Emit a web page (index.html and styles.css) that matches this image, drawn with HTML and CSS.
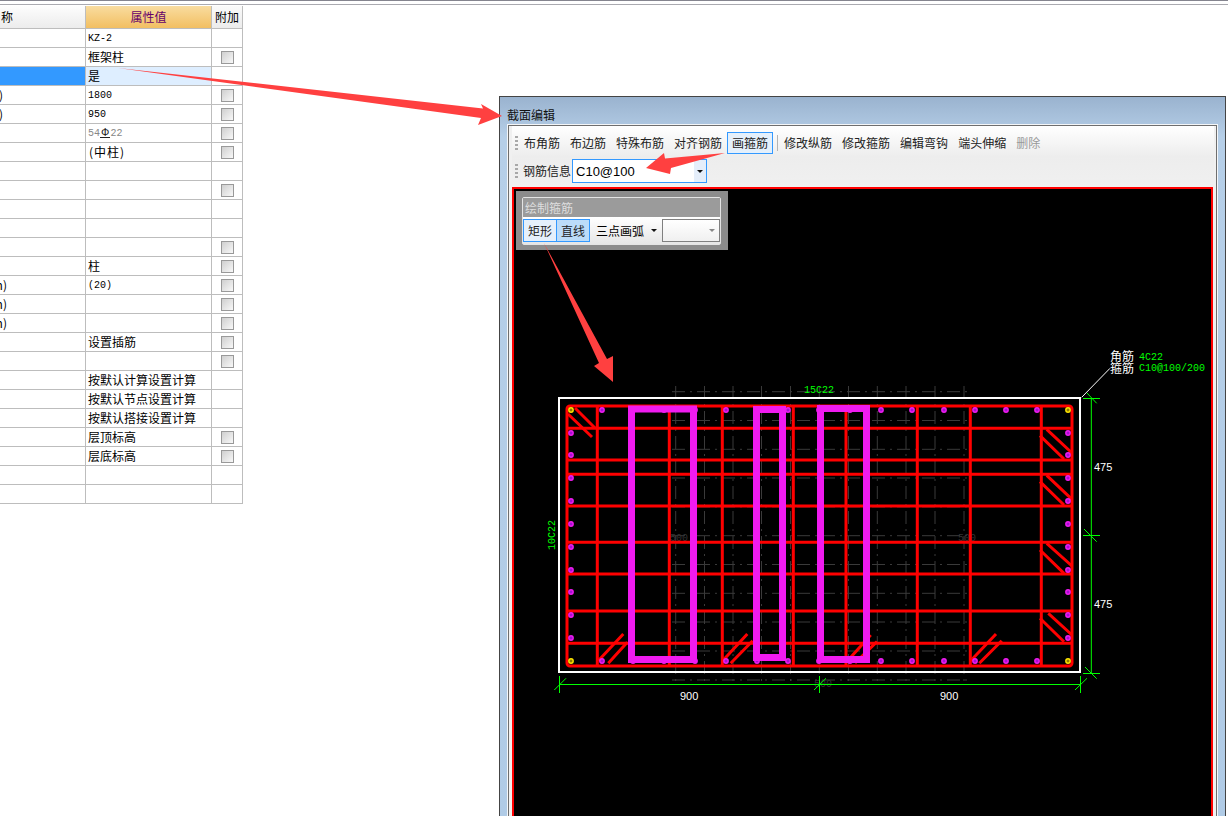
FILE: index.html
```html
<!DOCTYPE html>
<html lang="zh">
<head>
<meta charset="utf-8">
<title>截面编辑</title>
<link rel="stylesheet" href="styles.css">
</head>
<body>
<div class="topbar"></div>
<div class="grid">
  <div class="row head"><div class="c1 lab-h">属性名称</div><div class="c2">属性值</div><div class="c3">附加</div></div>
  <div class="row"><div class="c1"></div><div class="c2 num">KZ-2</div><div class="c3"></div></div>
  <div class="row"><div class="c1"></div><div class="c2">框架柱</div><div class="c3"><span class="cb"></span></div></div>
  <div class="row sel"><div class="c1"></div><div class="c2">是</div><div class="c3"></div></div>
  <div class="row"><div class="c1 lab-a">截面宽度(B边)(mm)</div><div class="c2 num">1800</div><div class="c3"><span class="cb"></span></div></div>
  <div class="row"><div class="c1 lab-a">截面高度(H边)(mm)</div><div class="c2 num">950</div><div class="c3"><span class="cb"></span></div></div>
  <div class="row"><div class="c1"></div><div class="c2 num muted">54<span class="grade">Ф</span>22</div><div class="c3"><span class="cb"></span></div></div>
  <div class="row"><div class="c1"></div><div class="c2 paren">(中柱)</div><div class="c3"><span class="cb"></span></div></div>
  <div class="row"><div class="c1"></div><div class="c2"></div><div class="c3"></div></div>
  <div class="row"><div class="c1"></div><div class="c2"></div><div class="c3"><span class="cb"></span></div></div>
  <div class="row"><div class="c1"></div><div class="c2"></div><div class="c3"></div></div>
  <div class="row"><div class="c1"></div><div class="c2"></div><div class="c3"></div></div>
  <div class="row"><div class="c1"></div><div class="c2"></div><div class="c3"><span class="cb"></span></div></div>
  <div class="row"><div class="c1"></div><div class="c2">柱</div><div class="c3"><span class="cb"></span></div></div>
  <div class="row"><div class="c1 lab-b">保护层厚度(mm)</div><div class="c2 num">(20)</div><div class="c3"><span class="cb"></span></div></div>
  <div class="row"><div class="c1 lab-b">芯柱截面宽(mm)</div><div class="c2"></div><div class="c3"><span class="cb"></span></div></div>
  <div class="row"><div class="c1 lab-b">芯柱截面高(mm)</div><div class="c2"></div><div class="c3"><span class="cb"></span></div></div>
  <div class="row"><div class="c1"></div><div class="c2">设置插筋</div><div class="c3"><span class="cb"></span></div></div>
  <div class="row"><div class="c1"></div><div class="c2"></div><div class="c3"><span class="cb"></span></div></div>
  <div class="row"><div class="c1"></div><div class="c2">按默认计算设置计算</div><div class="c3"></div></div>
  <div class="row"><div class="c1"></div><div class="c2">按默认节点设置计算</div><div class="c3"></div></div>
  <div class="row"><div class="c1"></div><div class="c2">按默认搭接设置计算</div><div class="c3"></div></div>
  <div class="row"><div class="c1"></div><div class="c2">层顶标高</div><div class="c3"><span class="cb"></span></div></div>
  <div class="row"><div class="c1"></div><div class="c2">层底标高</div><div class="c3"><span class="cb"></span></div></div>
  <div class="row"><div class="c1"></div><div class="c2"></div><div class="c3"></div></div>
  <div class="row"><div class="c1"></div><div class="c2"></div><div class="c3"></div></div>
</div>

<section class="win">
  <div class="win-title">截面编辑</div>
  <div class="panel">
    <div class="panel-inner">
      <div class="tools">
        <div class="tool-row">
          <span class="grip"></span>
          <span class="btn">布角筋</span>
          <span class="btn">布边筋</span>
          <span class="btn">特殊布筋</span>
          <span class="btn">对齐钢筋</span>
          <span class="btn on">画箍筋</span>
          <span class="sep"></span>
          <span class="btn">修改纵筋</span>
          <span class="btn">修改箍筋</span>
          <span class="btn">编辑弯钩</span>
          <span class="btn">端头伸缩</span>
          <span class="btn off">删除</span>
        </div>
        <div class="tool-row second">
          <span class="grip"></span>
          <span class="label">钢筋信息</span>
          <div class="combo"><span class="combo-text">C10@100</span><span class="combo-arrow"><i class="tri"></i></span></div>
        </div>
      </div>
      <div class="canvas">
        <svg class="drawing" viewBox="514 189 697 640" width="697" height="640" xmlns="http://www.w3.org/2000/svg">
          <defs>
            <g id="dot"><circle r="2.9" fill="#f01bf0"/><path d="M-1.5 0H1.5M0-1.5V1.5" stroke="#8a10c8" stroke-width="1"/></g>
            <g id="cor"><circle r="2.9" fill="#ffe600"/><path d="M-1.5 0H1.5M0-1.5V1.5" stroke="#6a5a00" stroke-width="1"/></g>
          </defs>
          <g class="ghost">
            <path d="M672 391.7H969M672 420.5H969M672 449.3H969M672 478H969M672 506.9H969M672 535.7H969M672 564.5H969M672 593.3H969M672 622H969M672 651H969M672 680H969"/>
            <path d="M675.7 386V686M704.5 386V686M733 386V686M761.5 386V686M790.5 386V686M819.3 386V686M848.5 386V686M877.3 386V686M906 386V686M935 386V686M964 386V686"/>
          </g>
          <text class="ghost-t" x="670" y="541">500</text>
          <text class="ghost-t" x="958" y="541">500</text>
          <text class="ghost-t" x="814" y="687">500</text>
          <rect class="outline" x="559" y="398" width="521" height="274"/>
          <g class="bars">
            <rect x="567" y="406" width="505" height="260" rx="3"/>
            <path d="M597.3 406V666M669.3 406V666M722.3 406V666M793.3 406V666M846 406V666M917.3 406V666M970.3 406V666M1041.3 406V666"/>
            <path d="M567 428.3H1072M567 460H1072M567 474.3H1072M567 506H1072M567 542.3H1072M567 574H1072M567 611H1072M567 643.3H1072"/>
            <path d="M575 408L595 428M568 414L592 437"/>
            <path d="M1046.7 429.3L1072 453M1040 435.7L1064 459M1046.7 475.3L1072 499.3M1040 481.7L1064 505M1046.7 543.3L1072 566M1040 550L1064 573.3M1048.3 613.3L1072 635M1040 618.3L1064 641.7"/>
            <path d="M598.3 660.7L623.3 634M608.3 663.3L627.3 642.3M722.7 660.7L747.3 634M730.7 663.3L752.7 640.7M848.3 660L870.7 635M855 663L877 641.7M970.7 660.7L996 634M979.3 663.3L1001.7 640.7"/>
          </g>
          <use href="#cor" x="571" y="410"/><use href="#cor" x="1068" y="410"/><use href="#cor" x="571" y="661"/><use href="#cor" x="1068" y="661"/>
          <use href="#dot" x="571" y="433"/><use href="#dot" x="571" y="455"/><use href="#dot" x="571" y="478"/><use href="#dot" x="571" y="501"/><use href="#dot" x="571" y="524"/><use href="#dot" x="571" y="547"/><use href="#dot" x="571" y="570"/><use href="#dot" x="571" y="592"/><use href="#dot" x="571" y="615"/><use href="#dot" x="571" y="638"/>
          <use href="#dot" x="1068" y="433"/><use href="#dot" x="1068" y="455"/><use href="#dot" x="1068" y="478"/><use href="#dot" x="1068" y="501"/><use href="#dot" x="1068" y="524"/><use href="#dot" x="1068" y="547"/><use href="#dot" x="1068" y="570"/><use href="#dot" x="1068" y="592"/><use href="#dot" x="1068" y="615"/><use href="#dot" x="1068" y="638"/>
          <use href="#dot" x="602" y="410"/><use href="#dot" x="633" y="410"/><use href="#dot" x="664" y="410"/><use href="#dot" x="695" y="410"/><use href="#dot" x="726" y="410"/><use href="#dot" x="757" y="410"/><use href="#dot" x="788" y="410"/><use href="#dot" x="819" y="410"/><use href="#dot" x="850" y="410"/><use href="#dot" x="881" y="410"/><use href="#dot" x="912" y="410"/><use href="#dot" x="944" y="410"/><use href="#dot" x="975" y="410"/><use href="#dot" x="1006" y="410"/><use href="#dot" x="1037" y="410"/>
          <use href="#dot" x="602" y="661"/><use href="#dot" x="633" y="661"/><use href="#dot" x="664" y="661"/><use href="#dot" x="695" y="661"/><use href="#dot" x="726" y="661"/><use href="#dot" x="757" y="661"/><use href="#dot" x="788" y="661"/><use href="#dot" x="819" y="661"/><use href="#dot" x="850" y="661"/><use href="#dot" x="881" y="661"/><use href="#dot" x="912" y="661"/><use href="#dot" x="944" y="661"/><use href="#dot" x="975" y="661"/><use href="#dot" x="1006" y="661"/><use href="#dot" x="1037" y="661"/>
          <g class="stirrup">
            <rect x="631.5" y="409" width="62" height="250.5"/>
            <rect x="756.5" y="409.5" width="26" height="248"/>
            <rect x="820.5" y="408.5" width="46" height="251"/>
          </g>
          <g class="dim">
            <path d="M1091.3 398V673M1083 398.5H1100M1083 535.5H1100M1083 673.5H1100M1086.7 392.7L1096.7 403.3M1084 529L1096.7 541.7M1085 667L1096.7 678.7"/>
            <path d="M559 684.5H1081M559.5 676V693M819.5 676V693M1080.5 676V693M554.3 690L566 678.3M814 690L826 678.3M1075 690L1087 678.3"/>
          </g>
          <path class="leader" d="M1081.7 397.3L1110 368.3"/>
          <text class="t-green" x="804" y="393">15C22</text>
          <text class="t-green" transform="translate(555 550) rotate(-90)">10C22</text>
          <text class="t-white" x="1094" y="471">475</text>
          <text class="t-white" x="1094" y="608">475</text>
          <text class="t-white" x="680" y="700">900</text>
          <text class="t-white" x="940" y="700">900</text>
          <text class="t-cjk" x="1110" y="361">角筋</text>
          <text class="t-cjk" x="1110" y="373">箍筋</text>
          <text class="t-green" x="1139" y="360">4C22</text>
          <text class="t-green" x="1139" y="371">C10@100/200</text>
        </svg>
        <div class="float">
          <div class="float-inner">
            <div class="float-title">绘制箍筋</div>
            <div class="float-row">
              <span class="fbtn a">矩形</span>
              <span class="fbtn b">直线</span>
              <span class="fmenu">三点画弧</span>
              <i class="tri fmenu-tri"></i>
              <div class="fcombo"><i class="tri gray"></i></div>
            </div>
          </div>
        </div>
      </div>
    </div>
  </div>
</section>

<svg class="arrows" viewBox="0 0 1228 816" width="1228" height="816" xmlns="http://www.w3.org/2000/svg">
  <polygon points="118,68 483,108.5 481,104 502,116 478,125 481,118"/>
  <polygon points="725,153 665,158.5 664,153 646,168 670,174 671,168"/>
  <polygon points="544,243 607,359 613,356 613,382 594,366 599,363"/>
</svg>
</body>
</html>
```
FILE: styles.css
```css
html, body {
  margin: 0;
  height: 816px;
  overflow: hidden;
  background: #fff;
}
body {
  position: relative;
  font: 12px/1 "Noto Sans CJK SC", "Liberation Sans", sans-serif;
  color: #000;
}
.topbar {
  height: 3px;
  border-top: 1px solid #85858f;
  border-bottom: 1px solid #aaaab0;
  margin-bottom: 1px;
}

/* property grid */
.grid {
  width: 243px;
}
.row {
  display: grid;
  grid-template-columns: 86px 126px 31px;
  height: 19px;
  box-sizing: border-box;
  border-bottom: 1px solid #bdbdbd;
}
.row > div {
  display: flex;
  align-items: center;
  white-space: nowrap;
  border-right: 1px solid #bdbdbd;
}
.c1 {
  justify-content: flex-end;
}
.c2 {
  padding-left: 2px;
}
.c3 {
  justify-content: center;
}
.lab-a {
  padding-right: 82px;
}
.lab-b {
  padding-right: 78px;
}
.lab-h {
  padding-right: 72px;
}
.row.head {
  height: 23px;
}
.head .c1 {
  background: linear-gradient(#fdfdfd, #ececec);
}
.head .c2 {
  justify-content: center;
  padding-left: 0;
  background: linear-gradient(#f9dc9f, #f2bf62);
  color: #66006b;
}
.head .c3 {
  background: linear-gradient(#fafafa, #ececec);
}
.sel .c1 {
  background: #3399ff;
}
.sel .c2 {
  background: #deeeff;
}
.num {
  font: 10px "Liberation Mono", monospace;
}
.muted {
  color: #888;
}
.paren {
  letter-spacing: 1px;
  padding-left: 3px;
}
.grade {
  color: #222;
  font: 11px "Liberation Sans", sans-serif;
  border-bottom: 1px solid #222;
  line-height: 9px;
  padding: 0 1px;
}
.cb {
  width: 11px;
  height: 11px;
  border: 1px solid #999;
  background: linear-gradient(135deg, #cfcfcf, #f8f8f8);
}

/* section editor window */
.win {
  position: absolute;
  left: 499px;
  top: 96px;
  width: 725px;
  height: 740px;
  border: 1px solid #444;
  border-bottom: 0;
  background: linear-gradient(#9ab3cf 0, #b6cfe8 40px, #b0cbe6 100%);
  display: flex;
  flex-direction: column;
}
.win-title {
  height: 27px;
  padding-left: 7px;
  display: flex;
  align-items: center;
  color: #111;
  flex: none;
  padding-top: 8px;
  box-sizing: border-box;
}
.panel {
  margin: 0 7px;
  flex: 1;
  border: 1px solid #f4f6f8;
  border-bottom: 0;
  display: flex;
}
.panel-inner {
  flex: 1;
  border: 1px solid #6e6e6e;
  border-bottom: 0;
  background: #f0f0f0;
  padding: 0 2px 0 3px;
}
.tools {
  height: 61px;
  box-sizing: border-box;
  padding: 6px 0 0 3px;
  background: linear-gradient(#fff, #ededed 50%, #f0f0f0);
}
.tool-row {
  display: flex;
  align-items: center;
  height: 22px;
}
.tool-row.second {
  height: 24px;
  margin-top: 5px;
}
.grip {
  width: 3px;
  height: 15px;
  margin-right: 1px;
  background: repeating-linear-gradient(#a8a8a8 0 2px, transparent 2px 4px);
}
.btn {
  box-sizing: border-box;
  height: 22px;
  padding: 0 4px;
  border: 1px solid transparent;
  display: flex;
  align-items: center;
  white-space: nowrap;
  color: #222;
}
.btn.on {
  border-color: #3399ff;
  background: #e5f0fb;
}
.btn.off {
  color: #999;
}
.sep {
  width: 1px;
  height: 16px;
  margin: 0 1px 0 4px;
  background: #b4b4b4;
}
.label {
  margin: 0 1px 0 4px;
  color: #222;
}
.combo {
  box-sizing: border-box;
  width: 135px;
  height: 24px;
  border: 1px solid #3399ff;
  background: #fff;
  display: flex;
  align-items: center;
  justify-content: space-between;
}
.combo-text {
  padding-left: 3px;
  font: 13px "Liberation Sans", sans-serif;
}
.combo-arrow {
  width: 12px;
  height: 22px;
  background: #e5eefa;
  display: flex;
  align-items: center;
  justify-content: center;
}
.tri {
  display: block;
  width: 0;
  height: 0;
  border-style: solid;
  border-width: 3px 3px 0;
  border-color: #111 transparent transparent;
}
.tri.gray {
  border-top-color: #888;
}

/* drawing canvas */
.canvas {
  position: relative;
  box-sizing: border-box;
  width: 701px;
  height: 650px;
  border: 2px solid #f00;
  background: #000;
  overflow: hidden;
}
.drawing {
  display: block;
}
.ghost {
  fill: none;
  stroke: #3a3a3a;
  stroke-width: 1;
  stroke-dasharray: 13 5 2 5;
}
.ghost-t {
  fill: #333;
  font: 10px "Liberation Mono", monospace;
}
.outline {
  fill: none;
  stroke: #fff;
  stroke-width: 2;
}
.bars {
  fill: none;
  stroke: #f00;
  stroke-width: 3;
}
.stirrup {
  fill: none;
  stroke: #f01bf0;
  stroke-width: 7;
}
.dim {
  fill: none;
  stroke: #0f0;
  stroke-width: 1;
}
.leader {
  fill: none;
  stroke: #fff;
  stroke-width: 1;
}
.t-green {
  fill: #0f0;
  font: 10px "Liberation Mono", monospace;
}
.t-white {
  fill: #fff;
  font: 11px "Liberation Sans", sans-serif;
}
.t-cjk {
  fill: #fff;
  font: 12px "Noto Sans CJK SC", sans-serif;
}

/* floating toolbar over the canvas */
.float {
  position: absolute;
  left: 2px;
  top: 2px;
  box-sizing: border-box;
  width: 212px;
  height: 59px;
  padding: 6px 7px 5px 6px;
  background: #8c8c8c;
}
.float-inner {
  height: 100%;
  box-sizing: border-box;
  border: 1px solid #e4e4e4;
  border-radius: 2px;
  display: flex;
  flex-direction: column;
}
.float-title {
  height: 19px;
  flex: none;
  background: #9b9b9b;
  color: #dedede;
  display: flex;
  align-items: center;
  padding-left: 2px;
}
.float-row {
  flex: 1;
  display: flex;
  align-items: center;
  background: linear-gradient(#fff, #e6e6e6);
}
.fbtn {
  box-sizing: border-box;
  height: 23px;
  border: 1px solid #3399ff;
  display: flex;
  align-items: center;
  justify-content: center;
  color: #222;
}
.fbtn.a {
  width: 34px;
  background: #e5f0fb;
}
.fbtn.b {
  width: 34px;
  margin-left: -1px;
  background: #bcdcf9;
}
.fmenu {
  margin-left: 6px;
}
.fmenu-tri {
  margin: 0 5px 0 7px;
}
.fcombo {
  box-sizing: border-box;
  width: 58px;
  height: 23px;
  border: 1px solid #808080;
  background: linear-gradient(#fff, #f0f0f0);
  display: flex;
  align-items: center;
  justify-content: flex-end;
  padding-right: 4px;
}

/* annotation arrows on top of the screenshot */
.arrows {
  position: absolute;
  left: 0;
  top: 0;
  pointer-events: none;
}
.arrows polygon {
  fill: #ff4040;
}
```
